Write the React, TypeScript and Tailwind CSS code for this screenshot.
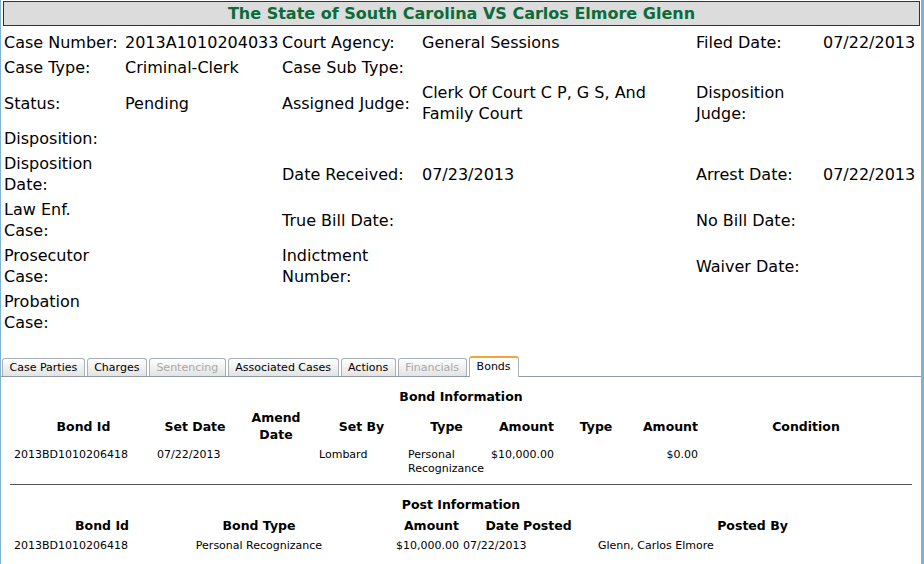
const font = { fontFamily: '"DejaVu Sans", Verdana, sans-serif' };

const caseRows: string[][] = [
  ["Case Number:", "2013A1010204033", "Court Agency:", "General Sessions", "Filed Date:", "07/22/2013"],
  ["Case Type:", "Criminal-Clerk", "Case Sub Type:", "", "", ""],
  ["Status:", "Pending", "Assigned Judge:", "Clerk Of Court C P, G S, And\nFamily Court", "Disposition\nJudge:", ""],
  ["Disposition:", "", "", "", "", ""],
  ["Disposition\nDate:", "", "Date Received:", "07/23/2013", "Arrest Date:", "07/22/2013"],
  ["Law Enf.\nCase:", "", "True Bill Date:", "", "No Bill Date:", ""],
  ["Prosecutor\nCase:", "", "Indictment\nNumber:", "", "Waiver Date:", ""],
  ["Probation\nCase:", "", "", "", "", ""],
];

const tabs = [
  { name: "Case Parties", off: false },
  { name: "Charges", off: false },
  { name: "Sentencing", off: true },
  { name: "Associated Cases", off: false },
  { name: "Actions", off: false },
  { name: "Financials", off: true },
];

const CaseInfo = () => (
  <div className="mt-[4px] ml-[1px] grid grid-cols-[121px_157px_140px_274px_127px_98px] text-[16px] leading-[21px] text-black">
    {caseRows.map((row, i) =>
      row.map((cell, j) => (
        <div key={`${i}-${j}`} className="flex items-center px-[2px] py-[2px]">
          <span className="whitespace-pre">{cell}</span>
        </div>
      ))
    )}
  </div>
);

const Tabs = () => (
  <div className="mt-[21px] flex items-end pl-[1px] border-b border-[#8d9ba4]">
    {tabs.map((t) => (
      <div
        key={t.name}
        className={`mr-[2px] h-[18px] px-[6.5px] border border-b-0 border-[#a9b1b8] rounded-t-[3px] bg-gradient-to-b from-white to-[#e3e3e3] text-[11px] leading-[17px] ${t.off ? "text-[#a8a8a8]" : "text-black"}`}
      >
        {t.name}
      </div>
    ))}
    <div className="-mb-px h-[21px] px-[7px] border border-b-0 border-[#a9b1b8] border-t-2 border-t-[#f3a533] rounded-t-[3px] bg-white text-[11px] leading-[18px] text-black">
      Bonds
    </div>
  </div>
);

const bondCols = "ml-[11px] grid grid-cols-[143px_80px_82px_89px_81px_69px_80px_64px_212px]";
const postCols = "ml-[11px] grid grid-cols-[119px_256px_74px_135px_313px]";

const BondInfo = () => (
  <div>
    <div className="mt-[12px] text-center text-[12.5px] leading-[16px] font-bold">Bond Information</div>
    <div className={`${bondCols} mt-[4px] text-[12.5px] leading-[17px] font-bold`}>
      <div className="self-center px-[2px] text-center">Bond Id</div>
      <div className="self-center px-[2px] text-center">Set Date</div>
      <div className="self-center px-[2px] text-center">Amend<br />Date</div>
      <div className="self-center px-[2px] text-center">Set By</div>
      <div className="self-center px-[2px] text-center">Type</div>
      <div className="self-center px-[2px] text-right">Amount</div>
      <div className="self-center px-[2px] text-center">Type</div>
      <div className="self-center px-[2px] text-right">Amount</div>
      <div className="self-center px-[2px] text-center">Condition</div>
    </div>
    <div className={`${bondCols} mt-[5px] text-[11px] leading-[14px]`}>
      <div className="px-[2px]">2013BD1010206418</div>
      <div className="px-[2px]">07/22/2013</div>
      <div className="px-[2px]"></div>
      <div className="px-[2px]">Lombard</div>
      <div className="px-[2px]">Personal<br />Recognizance</div>
      <div className="px-[2px] text-right">$10,000.00</div>
      <div className="px-[2px]"></div>
      <div className="px-[2px] text-right">$0.00</div>
      <div className="px-[2px]"></div>
    </div>
  </div>
);

const PostInfo = () => (
  <div>
    <div className="mt-[12px] text-center text-[12.5px] leading-[16px] font-bold">Post Information</div>
    <div className={`${postCols} mt-[5px] text-[12.5px] leading-[16px] font-bold`}>
      <div className="px-[2px] text-right">Bond Id</div>
      <div className="px-[2px] text-center">Bond Type</div>
      <div className="px-[2px] text-right">Amount</div>
      <div className="px-[2px] text-center">Date Posted</div>
      <div className="px-[2px] text-center">Posted By</div>
    </div>
    <div className={`${postCols} mt-[5px] text-[11px] leading-[14px]`}>
      <div className="px-[2px]">2013BD1010206418</div>
      <div className="px-[2px] text-center">Personal Recognizance</div>
      <div className="px-[2px] text-right">$10,000.00</div>
      <div className="px-[2px]">07/22/2013</div>
      <div className="px-[2px]">Glenn, Carlos Elmore</div>
    </div>
  </div>
);

export default function App() {
  return (
    <div className="h-[564px] w-[924px] overflow-hidden bg-[#7fb3cf]" style={font}>
      <div className="ml-px h-full w-[920px] bg-white pt-px text-black">
        <div className="ml-[2px] h-[25px] w-[917px] border border-[#333] bg-[#dcdcdc] text-center text-[16px] leading-[23px] font-bold text-[#0b6b3a]">
          The State of South Carolina VS Carlos Elmore Glenn
        </div>
        <CaseInfo />
        <Tabs />
        <div className="h-[186px] border-b border-[#9a9a9a]">
          <BondInfo />
          <div className="ml-[9px] mt-[8px] w-[902px] border-t border-[#555]" />
          <PostInfo />
        </div>
      </div>
    </div>
  );
}
